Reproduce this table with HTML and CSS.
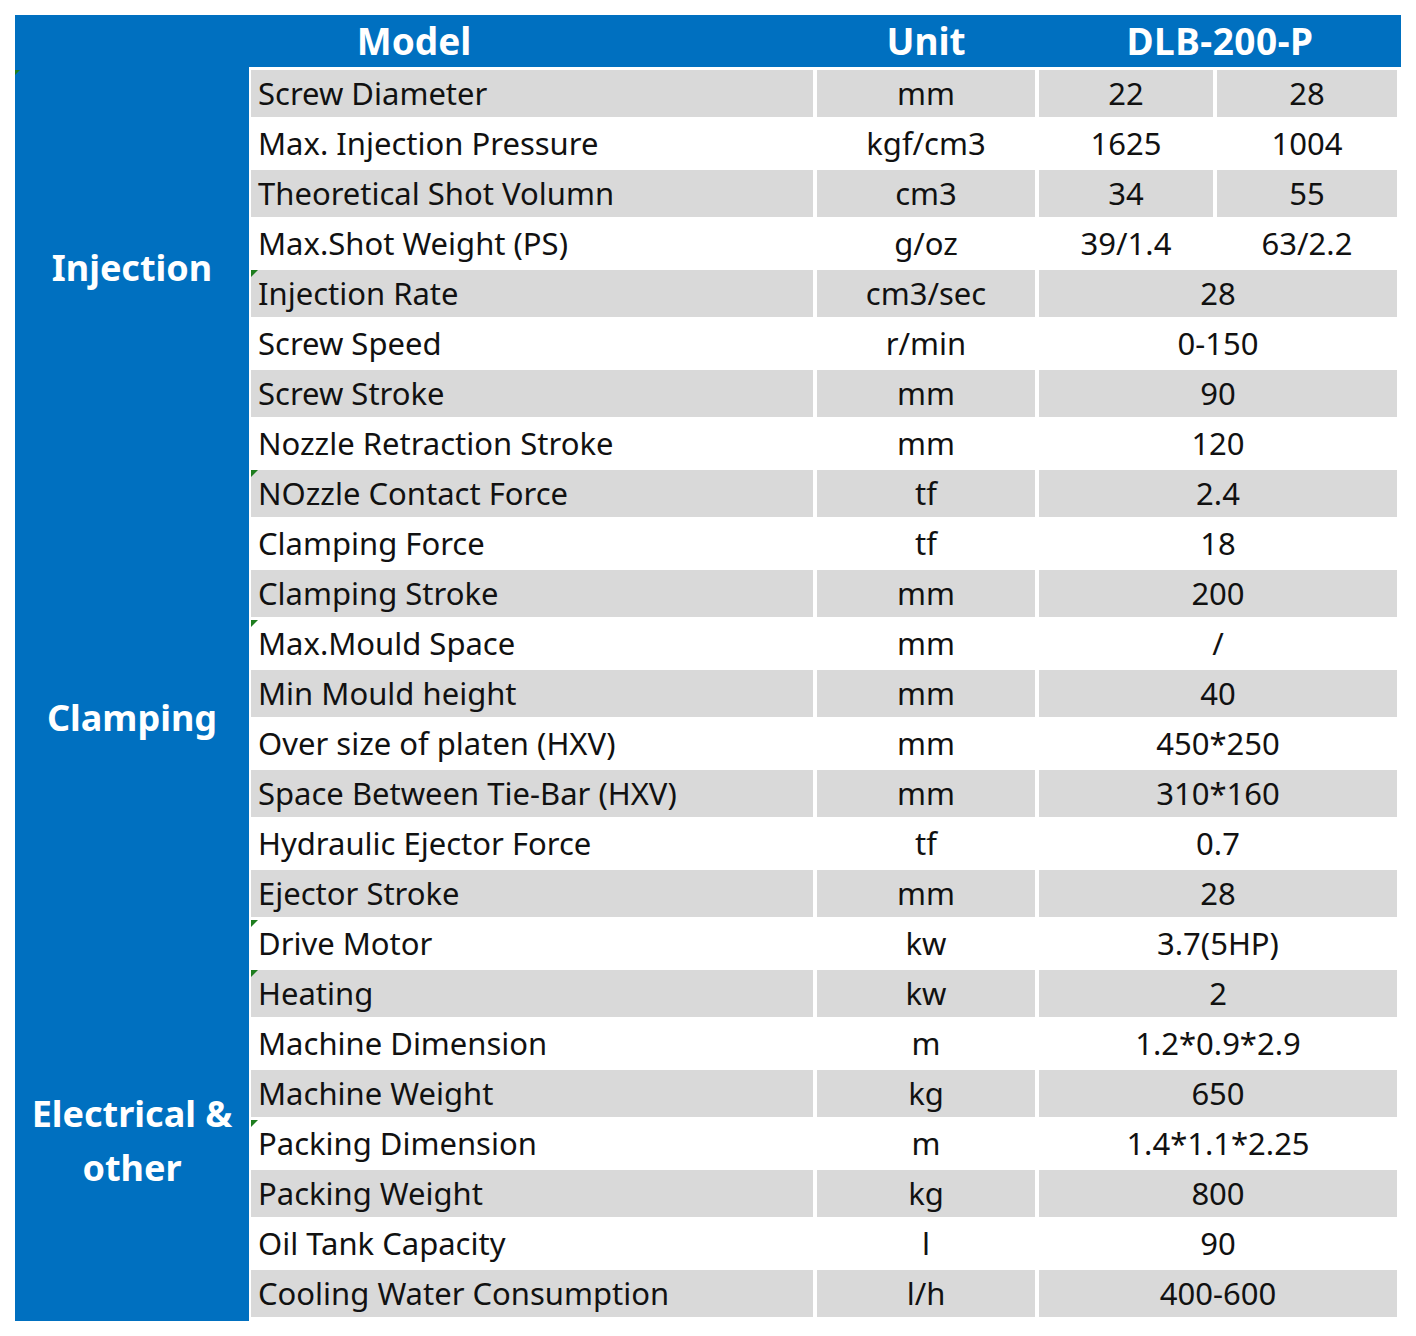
FILE: index.html
```html
<!DOCTYPE html>
<html>
<head>
<meta charset="utf-8">
<link rel="stylesheet" href="styles.css">
</head>
<body>
<div class="sheet">
  <div class="head">
    <div class="h-model">Model</div>
    <div class="h-unit">Unit</div>
    <div class="h-val">DLB-200-P</div>
  </div>
  <div class="body">
    <div class="side">
      <span class="mark mark-side"></span>
      <div class="sec sec-inj">Injection</div>
      <div class="sec sec-clamp">Clamping</div>
      <div class="sec sec-elec">Electrical &amp;<br>other</div>
    </div>
    <div class="rows">
      <div class="row g"><div class="c lbl">Screw Diameter</div><div class="c">mm</div><div class="c">22</div><div class="c">28</div></div>
      <div class="row"><div class="c lbl">Max. Injection Pressure</div><div class="c">kgf/cm3</div><div class="c">1625</div><div class="c">1004</div></div>
      <div class="row g"><div class="c lbl">Theoretical Shot Volumn</div><div class="c">cm3</div><div class="c">34</div><div class="c">55</div></div>
      <div class="row"><div class="c lbl">Max.Shot Weight (PS)</div><div class="c">g/oz</div><div class="c">39/1.4</div><div class="c">63/2.2</div></div>
      <div class="row g"><div class="c lbl"><span class="mark"></span>Injection Rate</div><div class="c">cm3/sec</div><div class="c span">28</div></div>
      <div class="row"><div class="c lbl">Screw Speed</div><div class="c">r/min</div><div class="c span">0-150</div></div>
      <div class="row g"><div class="c lbl">Screw Stroke</div><div class="c">mm</div><div class="c span">90</div></div>
      <div class="row"><div class="c lbl">Nozzle Retraction Stroke</div><div class="c">mm</div><div class="c span">120</div></div>
      <div class="row g"><div class="c lbl"><span class="mark"></span>NOzzle Contact Force</div><div class="c">tf</div><div class="c span">2.4</div></div>
      <div class="row"><div class="c lbl">Clamping Force</div><div class="c">tf</div><div class="c span">18</div></div>
      <div class="row g"><div class="c lbl">Clamping Stroke</div><div class="c">mm</div><div class="c span">200</div></div>
      <div class="row"><div class="c lbl"><span class="mark"></span>Max.Mould Space</div><div class="c">mm</div><div class="c span">/</div></div>
      <div class="row g"><div class="c lbl">Min Mould height</div><div class="c">mm</div><div class="c span">40</div></div>
      <div class="row"><div class="c lbl">Over size of platen (HXV)</div><div class="c">mm</div><div class="c span">450*250</div></div>
      <div class="row g"><div class="c lbl">Space Between Tie-Bar (HXV)</div><div class="c">mm</div><div class="c span">310*160</div></div>
      <div class="row"><div class="c lbl">Hydraulic Ejector Force</div><div class="c">tf</div><div class="c span">0.7</div></div>
      <div class="row g"><div class="c lbl">Ejector Stroke</div><div class="c">mm</div><div class="c span">28</div></div>
      <div class="row"><div class="c lbl"><span class="mark"></span>Drive Motor</div><div class="c">kw</div><div class="c span">3.7(5HP)</div></div>
      <div class="row g"><div class="c lbl"><span class="mark"></span>Heating</div><div class="c">kw</div><div class="c span">2</div></div>
      <div class="row"><div class="c lbl">Machine Dimension</div><div class="c">m</div><div class="c span">1.2*0.9*2.9</div></div>
      <div class="row g"><div class="c lbl">Machine Weight</div><div class="c">kg</div><div class="c span">650</div></div>
      <div class="row"><div class="c lbl"><span class="mark"></span>Packing Dimension</div><div class="c">m</div><div class="c span">1.4*1.1*2.25</div></div>
      <div class="row g"><div class="c lbl">Packing Weight</div><div class="c">kg</div><div class="c span">800</div></div>
      <div class="row"><div class="c lbl">Oil Tank Capacity</div><div class="c">l</div><div class="c span">90</div></div>
      <div class="row g"><div class="c lbl">Cooling Water Consumption</div><div class="c">l/h</div><div class="c span">400-600</div></div>
    </div>
  </div>
</div>
</body>
</html>
```

FILE: styles.css
```css
* { box-sizing: border-box; }
html, body { margin: 0; padding: 0; background: #ffffff; }
body {
  font-family: "Noto Sans", "Open Sans", sans-serif;
  color: #111111;
}
.sheet {
  margin: 15px 0 0 15px;
  width: 1386px;
}
.head {
  display: grid;
  grid-template-columns: 798px 222px 362px;
  column-gap: 2px;
  height: 52px;
  background: #0070c0;
  color: #ffffff;
  font-weight: 700;
  font-size: 37px;
  align-items: center;
  text-align: center;
  line-height: 52px;
}
.head > div { height: 52px; }
.h-val { letter-spacing: 0.5px; }
.body {
  display: flex;
  align-items: stretch;
}
.side {
  position: relative;
  width: 234px;
  background: #0070c0;
  color: #ffffff;
  font-weight: 700;
  font-size: 36px;
  display: flex;
  flex-direction: column;
  flex: none;
}
.sec {
  display: flex;
  align-items: center;
  justify-content: center;
  text-align: center;
  line-height: 54px;
}
.sec-inj { height: 401px; }
.sec-clamp { height: 500px; }
.sec-elec { flex: 1; padding-bottom: 8px; }
.rows {
  margin-left: 2px;
  padding: 3px 0 4px 0;
  display: flex;
  flex-direction: column;
  row-gap: 3px;
}
.row {
  display: grid;
  grid-template-columns: 562px 218px 174px 180px;
  column-gap: 4px;
  height: 47px;
}
.c {
  position: relative;
  height: 47px;
  font-size: 31px;
  line-height: 47px;
  text-align: center;
  white-space: nowrap;
}
.row.g .c { background: #d9d9d9; }
.c.lbl { text-align: left; padding-left: 7px; }
.c.span { grid-column: 3 / 5; }
.mark {
  position: absolute;
  left: 0;
  top: 0;
  width: 0;
  height: 0;
  border-top: 7px solid #1e7d1e;
  border-right: 7px solid transparent;
}
.mark-side { left: 0; top: 3px; border-top-width: 5px; border-right-width: 5px; }
```
